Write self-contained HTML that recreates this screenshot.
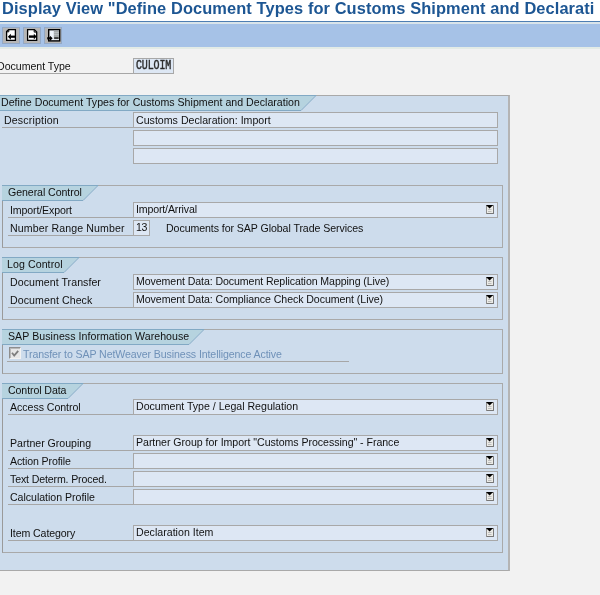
<!DOCTYPE html>
<html><head><meta charset="utf-8"><title>Display View</title>
<style>
html,body{margin:0;padding:0;}
body{width:600px;height:595px;overflow:hidden;background:#f2f2f2;position:relative;font-family:"Liberation Sans",Arial,sans-serif;font-size:10.6px;color:#111;}
.abs{position:absolute;}
#title{left:0;top:0;width:600px;height:21px;background:#fff;overflow:hidden;}
#tline{left:0;top:21px;width:600px;height:1px;background:#4f7fb3;}
#tbar{left:0;top:22px;width:600px;height:25px;background:#a6c2e7;border-top:2px solid #d9e4ea;box-sizing:border-box;}
#tbar2{left:0;top:47px;width:600px;height:2px;background:#e3ebe6;}
.btn{position:absolute;top:26.5px;width:16px;height:15.500px;background:#b6b6b6;border:1px solid #93a9c6;}
.btn svg{position:absolute;left:0;top:0;}
.grp{position:absolute;background:#cddcec;border:1px solid #a9a9a9;border-left-color:#9a9a9a;box-sizing:border-box;}
.tab{position:absolute;height:16px;overflow:hidden;}
.ul{position:absolute;height:1px;background:#a6a6a6;}
.inp{position:absolute;height:14px;background:#dde7f4;border:1px solid #a8a8a8;box-sizing:content-box;}
.t{position:absolute;line-height:12px;height:12px;white-space:nowrap;will-change:transform;}
.dd{position:absolute;width:8px;height:9px;}
</style></head><body>

<div id="title" class="abs"><div class="t" style="left:1.5px;top:-1.6px;line-height:20px;height:20px;font-weight:bold;font-size:16.4px;color:#1d5693;letter-spacing:0.1px">Display View "Define Document Types for Customs Shipment and Declarati</div></div>
<div id="tline" class="abs"></div><div id="tbar" class="abs"></div><div id="tbar2" class="abs"></div>
<div class="btn" style="left:2px"></div><svg class="abs" style="left:2px;top:26px" width="18" height="18" viewBox="0 0 18 18"><path d="M6.600 3.600H13.400V14.400H4.600V5.600Z" fill="#fff" stroke="#000" stroke-width="1.300"/><path d="M4.600 5.800H6.800V3.600" fill="none" stroke="#000" stroke-width="1"/><path d="M5.800 10.700L8.900 7.700V13.700Z" fill="#000"/><rect x="8.500" y="9.600" width="4.700" height="2.200" fill="#000"/></svg>
<div class="btn" style="left:23px"></div><svg class="abs" style="left:23px;top:26px" width="18" height="18" viewBox="0 0 18 18"><path d="M4.600 3.600H11.400L13.700 5.900V14.400H4.600Z" fill="#fff" stroke="#000" stroke-width="1.300"/><path d="M11.200 3.600V6.100H13.700" fill="none" stroke="#000" stroke-width="1"/><path d="M13.700 10.600L10.800 7.700V13.500Z" fill="#000"/><rect x="6" y="9.400" width="5" height="2.400" fill="#000"/></svg>
<div class="btn" style="left:44px"></div><svg class="abs" style="left:44px;top:26px" width="18" height="18" viewBox="0 0 18 18"><rect x="4.700" y="3.700" width="11" height="11.200" fill="#eef3fa" stroke="#000" stroke-width="1.400"/><rect x="9.800" y="4.600" width="5.200" height="8.600" fill="#a4a9aa"/><path d="M10 6.500h5M10 8.500h5" stroke="#bcc2c4" stroke-width="0.800"/><rect x="10.200" y="11.300" width="4.400" height="1.500" fill="#222"/><path d="M8.700 12.300L5.900 9.700V14.900Z" fill="#000"/><rect x="3.200" y="11.200" width="3" height="2.200" fill="#000"/></svg>
<div class="t" style="left:-2.6px;top:60.33px;letter-spacing:-0.02px;">Document Type</div><div class="ul" style="left:0px;top:73px;width:133px"></div>
<div class="inp" style="left:133px;top:58px;width:39px;"></div><div class="t" style="left:136.4px;top:59.1px;font-family:'Liberation Mono',monospace;font-size:10px;font-weight:normal;-webkit-text-stroke:0.35px #2a2a2a;letter-spacing:-0.15px;color:#2a2a2a;transform:scaleY(1.265);transform-origin:0 0">CULOIM</div>
<div class="grp" style="left:-1px;top:95px;width:511px;height:476px;border-right:2px solid #b4b4b4;border-color:#a9a9a9 #b4b4b4 #a9a9a9 #a9a9a9"></div>
<svg class="abs" style="left:0px;top:95px" width="318" height="16"><polygon points="0,0 316,0 301,15 0,15" fill="#b6d3df"/><path d="M0,0.5 H316 M316,0.5 L301,15.5 H0" fill="none" stroke="#82a9c4" stroke-width="1"/></svg><div class="t" style="left:1.3px;top:96.33px;letter-spacing:0.02px;">Define Document Types for Customs Shipment and Declaration</div>
<div class="t" style="left:3.9px;top:114.33px;letter-spacing:0.16px;">Description</div><div class="ul" style="left:2px;top:127px;width:131px"></div>
<div class="inp" style="left:133px;top:112px;width:363px;"></div><div class="t" style="left:136.4px;top:114.33px;letter-spacing:0.02px;">Customs Declaration: Import</div>
<div class="inp" style="left:133px;top:130px;width:363px;"></div>
<div class="inp" style="left:133px;top:148px;width:363px;"></div>
<div class="grp" style="left:2px;top:185px;width:501px;height:63px;"></div>
<svg class="abs" style="left:2px;top:185px" width="98" height="16"><polygon points="0,0 96,0 81,15 0,15" fill="#b6d3df"/><path d="M0,0.5 H96 M96,0.5 L81,15.5 H0" fill="none" stroke="#82a9c4" stroke-width="1"/></svg><div class="t" style="left:8.2px;top:186.33px;letter-spacing:-0.07px;">General Control</div>
<div class="t" style="left:9.6px;top:204.33px;letter-spacing:-0.13px;">Import/Export</div><div class="ul" style="left:8px;top:217px;width:125px"></div>
<div class="inp" style="left:133px;top:202px;width:363px;"></div><div class="t" style="left:136.0px;top:203.33px;letter-spacing:-0.15px;">Import/Arrival</div><svg class="dd" style="left:486px;top:205px" viewBox="0 0 8 9"><rect x="0.500" y="0.500" width="7" height="8" fill="#ebebe7" stroke="#8f8f8f"/><path d="M7.500 1v7.500h-6.500" fill="none" stroke="#777" stroke-width="1"/><path d="M2 4.500h3.500M2 6.500h3.500" stroke="#bdbdbd" stroke-width="1"/><path d="M0 0h7.200l-3.600 3.400z" fill="#000"/></svg>
<div class="t" style="left:9.6px;top:222.33px;letter-spacing:0.12px;">Number Range Number</div><div class="ul" style="left:8px;top:235px;width:125px"></div>
<div class="inp" style="left:133px;top:220px;width:15px;"></div><div class="t" style="left:136.0px;top:221.33px;letter-spacing:-0.3px;">13</div>
<div class="t" style="left:165.5px;top:222.33px;letter-spacing:-0.07px;">Documents for SAP Global Trade Services</div>
<div class="grp" style="left:2px;top:257px;width:501px;height:63px;"></div>
<svg class="abs" style="left:2px;top:257px" width="79" height="16"><polygon points="0,0 77,0 62,15 0,15" fill="#b6d3df"/><path d="M0,0.5 H77 M77,0.5 L62,15.5 H0" fill="none" stroke="#82a9c4" stroke-width="1"/></svg><div class="t" style="left:7.2px;top:258.33px;letter-spacing:0.08px;">Log Control</div>
<div class="t" style="left:9.6px;top:276.33px;letter-spacing:0.05px;">Document Transfer</div>
<div class="inp" style="left:133px;top:274px;width:363px;"></div><div class="t" style="left:136.0px;top:275.33px;letter-spacing:-0.08px;">Movement Data: Document Replication Mapping (Live)</div><svg class="dd" style="left:486px;top:277px" viewBox="0 0 8 9"><rect x="0.500" y="0.500" width="7" height="8" fill="#ebebe7" stroke="#8f8f8f"/><path d="M7.500 1v7.500h-6.500" fill="none" stroke="#777" stroke-width="1"/><path d="M2 4.500h3.500M2 6.500h3.500" stroke="#bdbdbd" stroke-width="1"/><path d="M0 0h7.200l-3.600 3.400z" fill="#000"/></svg>
<div class="t" style="left:9.6px;top:294.33px;letter-spacing:0.08px;">Document Check</div><div class="ul" style="left:8px;top:307px;width:125px"></div>
<div class="inp" style="left:133px;top:292px;width:363px;"></div><div class="t" style="left:136.0px;top:293.33px;letter-spacing:-0.07px;">Movement Data: Compliance Check Document (Live)</div><svg class="dd" style="left:486px;top:295px" viewBox="0 0 8 9"><rect x="0.500" y="0.500" width="7" height="8" fill="#ebebe7" stroke="#8f8f8f"/><path d="M7.500 1v7.500h-6.500" fill="none" stroke="#777" stroke-width="1"/><path d="M2 4.500h3.500M2 6.500h3.500" stroke="#bdbdbd" stroke-width="1"/><path d="M0 0h7.200l-3.600 3.400z" fill="#000"/></svg>
<div class="grp" style="left:2px;top:329px;width:501px;height:45px;"></div>
<svg class="abs" style="left:2px;top:329px" width="204" height="16"><polygon points="0,0 202,0 187,15 0,15" fill="#b6d3df"/><path d="M0,0.5 H202 M202,0.5 L187,15.5 H0" fill="none" stroke="#82a9c4" stroke-width="1"/></svg><div class="t" style="left:7.5px;top:330.33px;letter-spacing:0.05px;">SAP Business Information Warehouse</div>
<div class="abs" style="left:9px;top:347px;width:10px;height:10px;background:#e7e7e7;border:1px solid;border-color:#8e8e8e #f2f2f2 #f2f2f2 #8e8e8e;box-shadow:inset 1px 1px 0 #b9b9b9"><svg width="10" height="10" style="position:absolute;left:0;top:0"><path d="M2 4.800l2.200 2.700 4-4.700" stroke="#7e7e7e" stroke-width="1.800" fill="none"/></svg></div>
<div class="t" style="left:23.2px;top:348.33px;letter-spacing:-0.1px;color:#6f91b8;">Transfer to SAP NetWeaver Business Intelligence Active</div>
<div class="ul" style="left:7px;top:361px;width:342px"></div>
<div class="grp" style="left:2px;top:383px;width:501px;height:170px;"></div>
<svg class="abs" style="left:2px;top:383px" width="83" height="16"><polygon points="0,0 81,0 66,15 0,15" fill="#b6d3df"/><path d="M0,0.5 H81 M81,0.5 L66,15.5 H0" fill="none" stroke="#82a9c4" stroke-width="1"/></svg><div class="t" style="left:8.2px;top:384.33px;letter-spacing:-0.09px;">Control Data</div>
<div class="t" style="left:10.0px;top:401.33px;letter-spacing:-0.04px;">Access Control</div><div class="ul" style="left:8px;top:414px;width:125px"></div>
<div class="inp" style="left:133px;top:399px;width:363px;"></div><div class="t" style="left:136.0px;top:400.33px;letter-spacing:-0.01px;">Document Type / Legal Regulation</div><svg class="dd" style="left:486px;top:402px" viewBox="0 0 8 9"><rect x="0.500" y="0.500" width="7" height="8" fill="#ebebe7" stroke="#8f8f8f"/><path d="M7.500 1v7.500h-6.500" fill="none" stroke="#777" stroke-width="1"/><path d="M2 4.500h3.500M2 6.500h3.500" stroke="#bdbdbd" stroke-width="1"/><path d="M0 0h7.200l-3.600 3.400z" fill="#000"/></svg>
<div class="t" style="left:9.6px;top:437.33px;letter-spacing:-0.01px;">Partner Grouping</div><div class="ul" style="left:8px;top:450px;width:125px"></div>
<div class="inp" style="left:133px;top:435px;width:363px;"></div><div class="t" style="left:136.0px;top:436.33px;letter-spacing:-0.04px;">Partner Group for Import "Customs Processing" - France</div><svg class="dd" style="left:486px;top:438px" viewBox="0 0 8 9"><rect x="0.500" y="0.500" width="7" height="8" fill="#ebebe7" stroke="#8f8f8f"/><path d="M7.500 1v7.500h-6.500" fill="none" stroke="#777" stroke-width="1"/><path d="M2 4.500h3.500M2 6.500h3.500" stroke="#bdbdbd" stroke-width="1"/><path d="M0 0h7.200l-3.600 3.400z" fill="#000"/></svg>
<div class="t" style="left:10.0px;top:455.33px;letter-spacing:-0.12px;">Action Profile</div><div class="ul" style="left:8px;top:468px;width:125px"></div>
<div class="inp" style="left:133px;top:453px;width:363px;"></div><svg class="dd" style="left:486px;top:456px" viewBox="0 0 8 9"><rect x="0.500" y="0.500" width="7" height="8" fill="#ebebe7" stroke="#8f8f8f"/><path d="M7.500 1v7.500h-6.500" fill="none" stroke="#777" stroke-width="1"/><path d="M2 4.500h3.500M2 6.500h3.500" stroke="#bdbdbd" stroke-width="1"/><path d="M0 0h7.200l-3.600 3.400z" fill="#000"/></svg>
<div class="t" style="left:9.8px;top:473.33px;letter-spacing:-0.14px;">Text Determ. Proced.</div><div class="ul" style="left:8px;top:486px;width:125px"></div>
<div class="inp" style="left:133px;top:471px;width:363px;"></div><svg class="dd" style="left:486px;top:474px" viewBox="0 0 8 9"><rect x="0.500" y="0.500" width="7" height="8" fill="#ebebe7" stroke="#8f8f8f"/><path d="M7.500 1v7.500h-6.500" fill="none" stroke="#777" stroke-width="1"/><path d="M2 4.500h3.500M2 6.500h3.500" stroke="#bdbdbd" stroke-width="1"/><path d="M0 0h7.200l-3.600 3.400z" fill="#000"/></svg>
<div class="t" style="left:10.0px;top:491.33px;letter-spacing:-0.03px;">Calculation Profile</div><div class="ul" style="left:8px;top:504px;width:125px"></div>
<div class="inp" style="left:133px;top:489px;width:363px;"></div><svg class="dd" style="left:486px;top:492px" viewBox="0 0 8 9"><rect x="0.500" y="0.500" width="7" height="8" fill="#ebebe7" stroke="#8f8f8f"/><path d="M7.500 1v7.500h-6.500" fill="none" stroke="#777" stroke-width="1"/><path d="M2 4.500h3.500M2 6.500h3.500" stroke="#bdbdbd" stroke-width="1"/><path d="M0 0h7.200l-3.600 3.400z" fill="#000"/></svg>
<div class="t" style="left:9.6px;top:527.33px;letter-spacing:-0.1px;">Item Category</div><div class="ul" style="left:8px;top:540px;width:125px"></div>
<div class="inp" style="left:133px;top:525px;width:363px;"></div><div class="t" style="left:136.0px;top:526.33px;letter-spacing:0.02px;">Declaration Item</div><svg class="dd" style="left:486px;top:528px" viewBox="0 0 8 9"><rect x="0.500" y="0.500" width="7" height="8" fill="#ebebe7" stroke="#8f8f8f"/><path d="M7.500 1v7.500h-6.500" fill="none" stroke="#777" stroke-width="1"/><path d="M2 4.500h3.500M2 6.500h3.500" stroke="#bdbdbd" stroke-width="1"/><path d="M0 0h7.200l-3.600 3.400z" fill="#000"/></svg>
</body></html>
